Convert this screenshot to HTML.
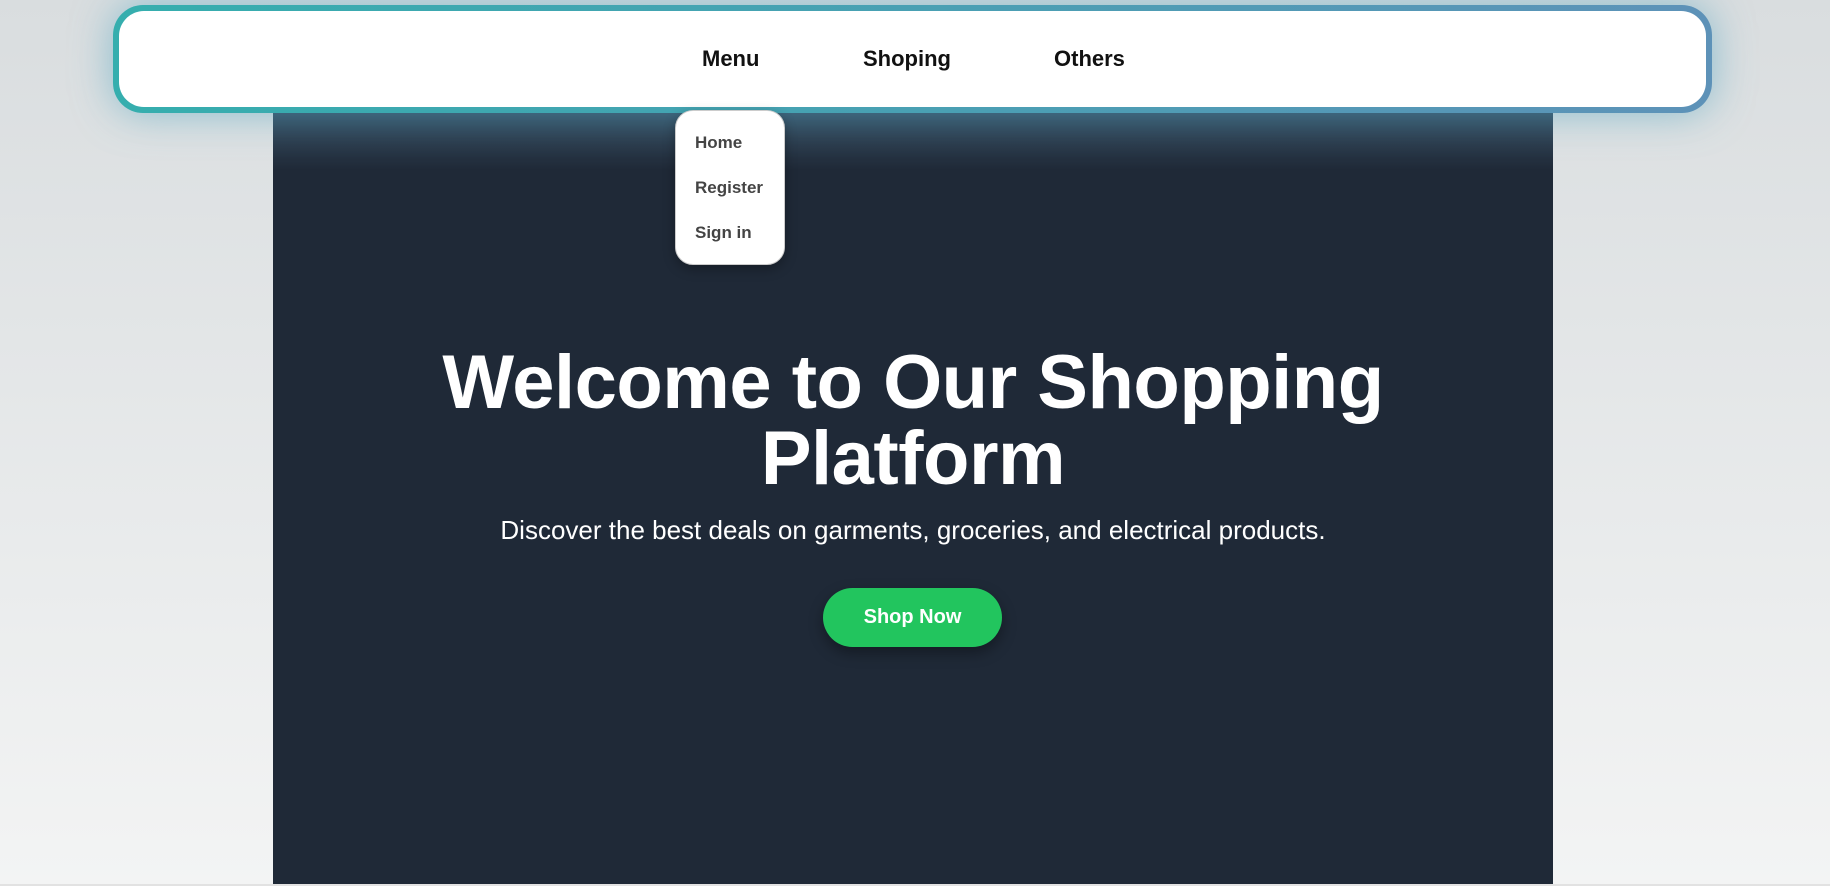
<!DOCTYPE html>
<html><head><meta charset="utf-8"><style>
html,body{margin:0;padding:0;}
body{width:1830px;height:886px;overflow:hidden;position:relative;background:linear-gradient(#d9dddf,#f3f4f4);font-family:"Liberation Sans",Arial,sans-serif;}
.strip{position:absolute;left:0;right:0;bottom:0;height:2px;background:#e2e2e2;}
.hero{position:absolute;left:273px;top:60px;width:1280px;height:824px;background:linear-gradient(#4a6275 0px,#3a5064 53px,#1f2937 110px,#1f2937);}
.nav{position:absolute;left:113px;top:5px;width:1599px;height:108px;box-sizing:border-box;border-radius:30px;padding:6px;background:linear-gradient(90deg,#35aeae,#5d92b8);box-shadow:0 0 40px rgba(70,160,190,.55);}
.nav .in{width:100%;height:100%;background:#fff;border-radius:25px;position:relative;}
.nav span{position:absolute;top:35px;font-size:22px;font-weight:bold;color:#111;}
.dd{position:absolute;left:675px;top:110px;width:110px;height:155px;box-sizing:border-box;background:#fff;border:1px solid #ccc;border-radius:18px;box-shadow:0 4px 12px rgba(0,0,0,.3);}
.dd div{position:absolute;left:19px;font-size:17px;font-weight:bold;color:#444;}
h1{position:absolute;left:273px;width:1280px;top:345px;margin:0;text-align:center;color:#fff;font-size:76px;line-height:76px;font-weight:bold;letter-spacing:-0.5px;}
p{position:absolute;left:273px;width:1280px;top:515px;margin:0;text-align:center;color:#fff;font-size:26px;}
.btn{position:absolute;left:823px;top:588px;width:179px;height:59px;border-radius:30px;background:#22c55e;color:#fff;font-weight:bold;font-size:20px;line-height:59px;text-align:center;box-shadow:0 6px 14px rgba(0,0,0,.35);}
</style></head><body>
<div class="hero"></div>
<div class="strip"></div>
<div class="nav"><div class="in">
<span style="left:583px">Menu</span>
<span style="left:744px">Shoping</span>
<span style="left:935px">Others</span>
</div></div>
<div class="dd"><div style="top:22px">Home</div><div style="top:67px">Register</div><div style="top:112px">Sign in</div></div>
<h1>Welcome to Our Shopping<br>Platform</h1>
<p>Discover the best deals on garments, groceries, and electrical products.</p>
<div class="btn">Shop Now</div>
</body></html>
